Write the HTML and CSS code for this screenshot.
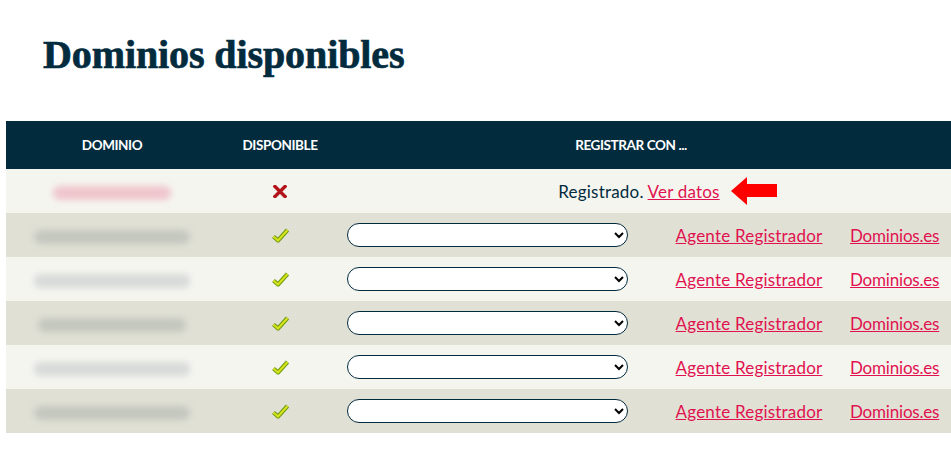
FILE: index.html
```html
<!DOCTYPE html>
<html lang="es">
<head>
<meta charset="utf-8">
<title>Dominios disponibles</title>
<link rel="stylesheet" href="styles.css">
</head>
<body>
<h1 class="title">Dominios disponibles</h1>
<table class="domains">
  <colgroup>
    <col class="c-dom"><col class="c-disp"><col class="c-sel"><col class="c-agent"><col class="c-es">
  </colgroup>
  <thead>
    <tr>
      <th>DOMINIO</th>
      <th>DISPONIBLE</th>
      <th colspan="3" class="th-reg">REGISTRAR CON ...</th>
    </tr>
  </thead>
  <tbody>
    <tr class="light">
      <td><span class="blur pink"></span></td>
      <td><svg class="ico-x" width="14" height="13" viewBox="0 0 14 13"><path d="M2 1.5 L12 11.5 M12 1.5 L2 11.5" stroke="#b3141a" stroke-width="3.4" stroke-linecap="square"/></svg></td>
      <td colspan="3" class="reg-cell"><span class="reg">Registrado. <a href="#" class="link">Ver datos</a><svg class="arrow" width="46" height="28" viewBox="0 0 46 28"><polygon points="0,14 16,0 16,7 46,7 46,20 16,20 16,28" fill="#ff0000"/></svg></span></td>
    </tr>
    <tr class="dark">
      <td><span class="blur gray"></span></td>
      <td><svg class="ico-ok" width="17" height="15" viewBox="0 0 17 15"><path d="M1.5 8.5 L6 12.5 L15.5 2" fill="none" stroke="#6f9a12" stroke-width="4.2" stroke-linejoin="round"/><path d="M1.5 8.5 L6 12.5 L15.5 2" fill="none" stroke="#d7e41a" stroke-width="2"/></svg></td>
      <td class="sel-cell"><select class="sel"><option></option></select></td>
      <td class="agent"><a href="#" class="link">Agente Registrador</a></td>
      <td class="es"><a href="#" class="link">Dominios.es</a></td>
    </tr>
    <tr class="light">
      <td><span class="blur gray lt"></span></td>
      <td><svg class="ico-ok" width="17" height="15" viewBox="0 0 17 15"><path d="M1.5 8.5 L6 12.5 L15.5 2" fill="none" stroke="#6f9a12" stroke-width="4.2" stroke-linejoin="round"/><path d="M1.5 8.5 L6 12.5 L15.5 2" fill="none" stroke="#d7e41a" stroke-width="2"/></svg></td>
      <td class="sel-cell"><select class="sel"><option></option></select></td>
      <td class="agent"><a href="#" class="link">Agente Registrador</a></td>
      <td class="es"><a href="#" class="link">Dominios.es</a></td>
    </tr>
    <tr class="dark">
      <td><span class="blur gray short"></span></td>
      <td><svg class="ico-ok" width="17" height="15" viewBox="0 0 17 15"><path d="M1.5 8.5 L6 12.5 L15.5 2" fill="none" stroke="#6f9a12" stroke-width="4.2" stroke-linejoin="round"/><path d="M1.5 8.5 L6 12.5 L15.5 2" fill="none" stroke="#d7e41a" stroke-width="2"/></svg></td>
      <td class="sel-cell"><select class="sel"><option></option></select></td>
      <td class="agent"><a href="#" class="link">Agente Registrador</a></td>
      <td class="es"><a href="#" class="link">Dominios.es</a></td>
    </tr>
    <tr class="light">
      <td><span class="blur gray lt"></span></td>
      <td><svg class="ico-ok" width="17" height="15" viewBox="0 0 17 15"><path d="M1.5 8.5 L6 12.5 L15.5 2" fill="none" stroke="#6f9a12" stroke-width="4.2" stroke-linejoin="round"/><path d="M1.5 8.5 L6 12.5 L15.5 2" fill="none" stroke="#d7e41a" stroke-width="2"/></svg></td>
      <td class="sel-cell"><select class="sel"><option></option></select></td>
      <td class="agent"><a href="#" class="link">Agente Registrador</a></td>
      <td class="es"><a href="#" class="link">Dominios.es</a></td>
    </tr>
    <tr class="dark">
      <td><span class="blur gray"></span></td>
      <td><svg class="ico-ok" width="17" height="15" viewBox="0 0 17 15"><path d="M1.5 8.5 L6 12.5 L15.5 2" fill="none" stroke="#6f9a12" stroke-width="4.2" stroke-linejoin="round"/><path d="M1.5 8.5 L6 12.5 L15.5 2" fill="none" stroke="#d7e41a" stroke-width="2"/></svg></td>
      <td class="sel-cell"><select class="sel"><option></option></select></td>
      <td class="agent"><a href="#" class="link">Agente Registrador</a></td>
      <td class="es"><a href="#" class="link">Dominios.es</a></td>
    </tr>
  </tbody>
</table>
</body>
</html>
```

FILE: styles.css
```css
html, body {
  margin: 0;
  padding: 0;
  background: #ffffff;
}
body {
  padding: 31px 0 0 6px;
  font-family: Lato, "Noto Sans", sans-serif;
  color: #022b3e;
  overflow: hidden;
}
.title {
  margin: 0 0 42px 37px;
  font-family: "Liberation Serif", "Times New Roman", serif;
  font-weight: bold;
  font-size: 40px;
  line-height: 48px;
  color: #022b3e;
  letter-spacing: -0.1px;
  -webkit-text-stroke: 0.7px #022b3e;
}
.domains {
  border-collapse: collapse;
  table-layout: fixed;
  width: 945px;
}
.c-dom { width: 212px; }
.c-disp { width: 124px; }
.c-sel { width: 308px; }
.c-agent { width: 198px; }
.c-es { width: 103px; }
.domains th {
  background: #022b3e;
  color: #ffffff;
  height: 48px;
  padding: 0;
  font-size: 13.5px;
  font-weight: bold;
  letter-spacing: -0.4px;
  text-align: center;
}
.domains th.th-reg {
  padding-right: 31px;
}
.domains td {
  height: 44px;
  padding: 0;
  text-align: center;
  vertical-align: middle;
  font-size: 17px;
  letter-spacing: 0.2px;
}
.light td { background: #f5f5f0; }
.dark td { background: #e0e0d5; }
.blur {
  display: inline-block;
  width: 156px;
  height: 14px;
  border-radius: 7px;
  filter: blur(3px);
  vertical-align: middle;
}
.blur.pink {
  width: 118px;
  background: #efc5cc;
}
.blur.gray { background: #c4c7be; }
.blur.gray.lt { background: #d7dad8; }
.blur.gray.short { width: 148px; }
.ico-x, .ico-ok {
  display: block;
  margin: 0 auto;
}
.domains td.reg-cell {
  text-align: center;
  padding-right: 15px;
}
.reg {
  position: relative;
  display: inline-block;
}
.arrow {
  position: absolute;
  left: 100%;
  top: 50%;
  margin-left: 11px;
  margin-top: -14px;
}
.link {
  color: #e0124f;
  text-decoration: underline;
}
.domains td.sel-cell {
  text-align: left;
  padding-left: 5px;
}
.sel {
  width: 281px;
  height: 24px;
  border: 1px solid #022b3e;
  border-radius: 12px;
  background: #ffffff;
  display: block;
  font-size: 14px;
}
.domains td.agent {
  text-align: center;
}
.domains td.es {
  text-align: left;
  padding-left: 2px;
}
.domains td.es .link {
  letter-spacing: -0.2px;
}
```
